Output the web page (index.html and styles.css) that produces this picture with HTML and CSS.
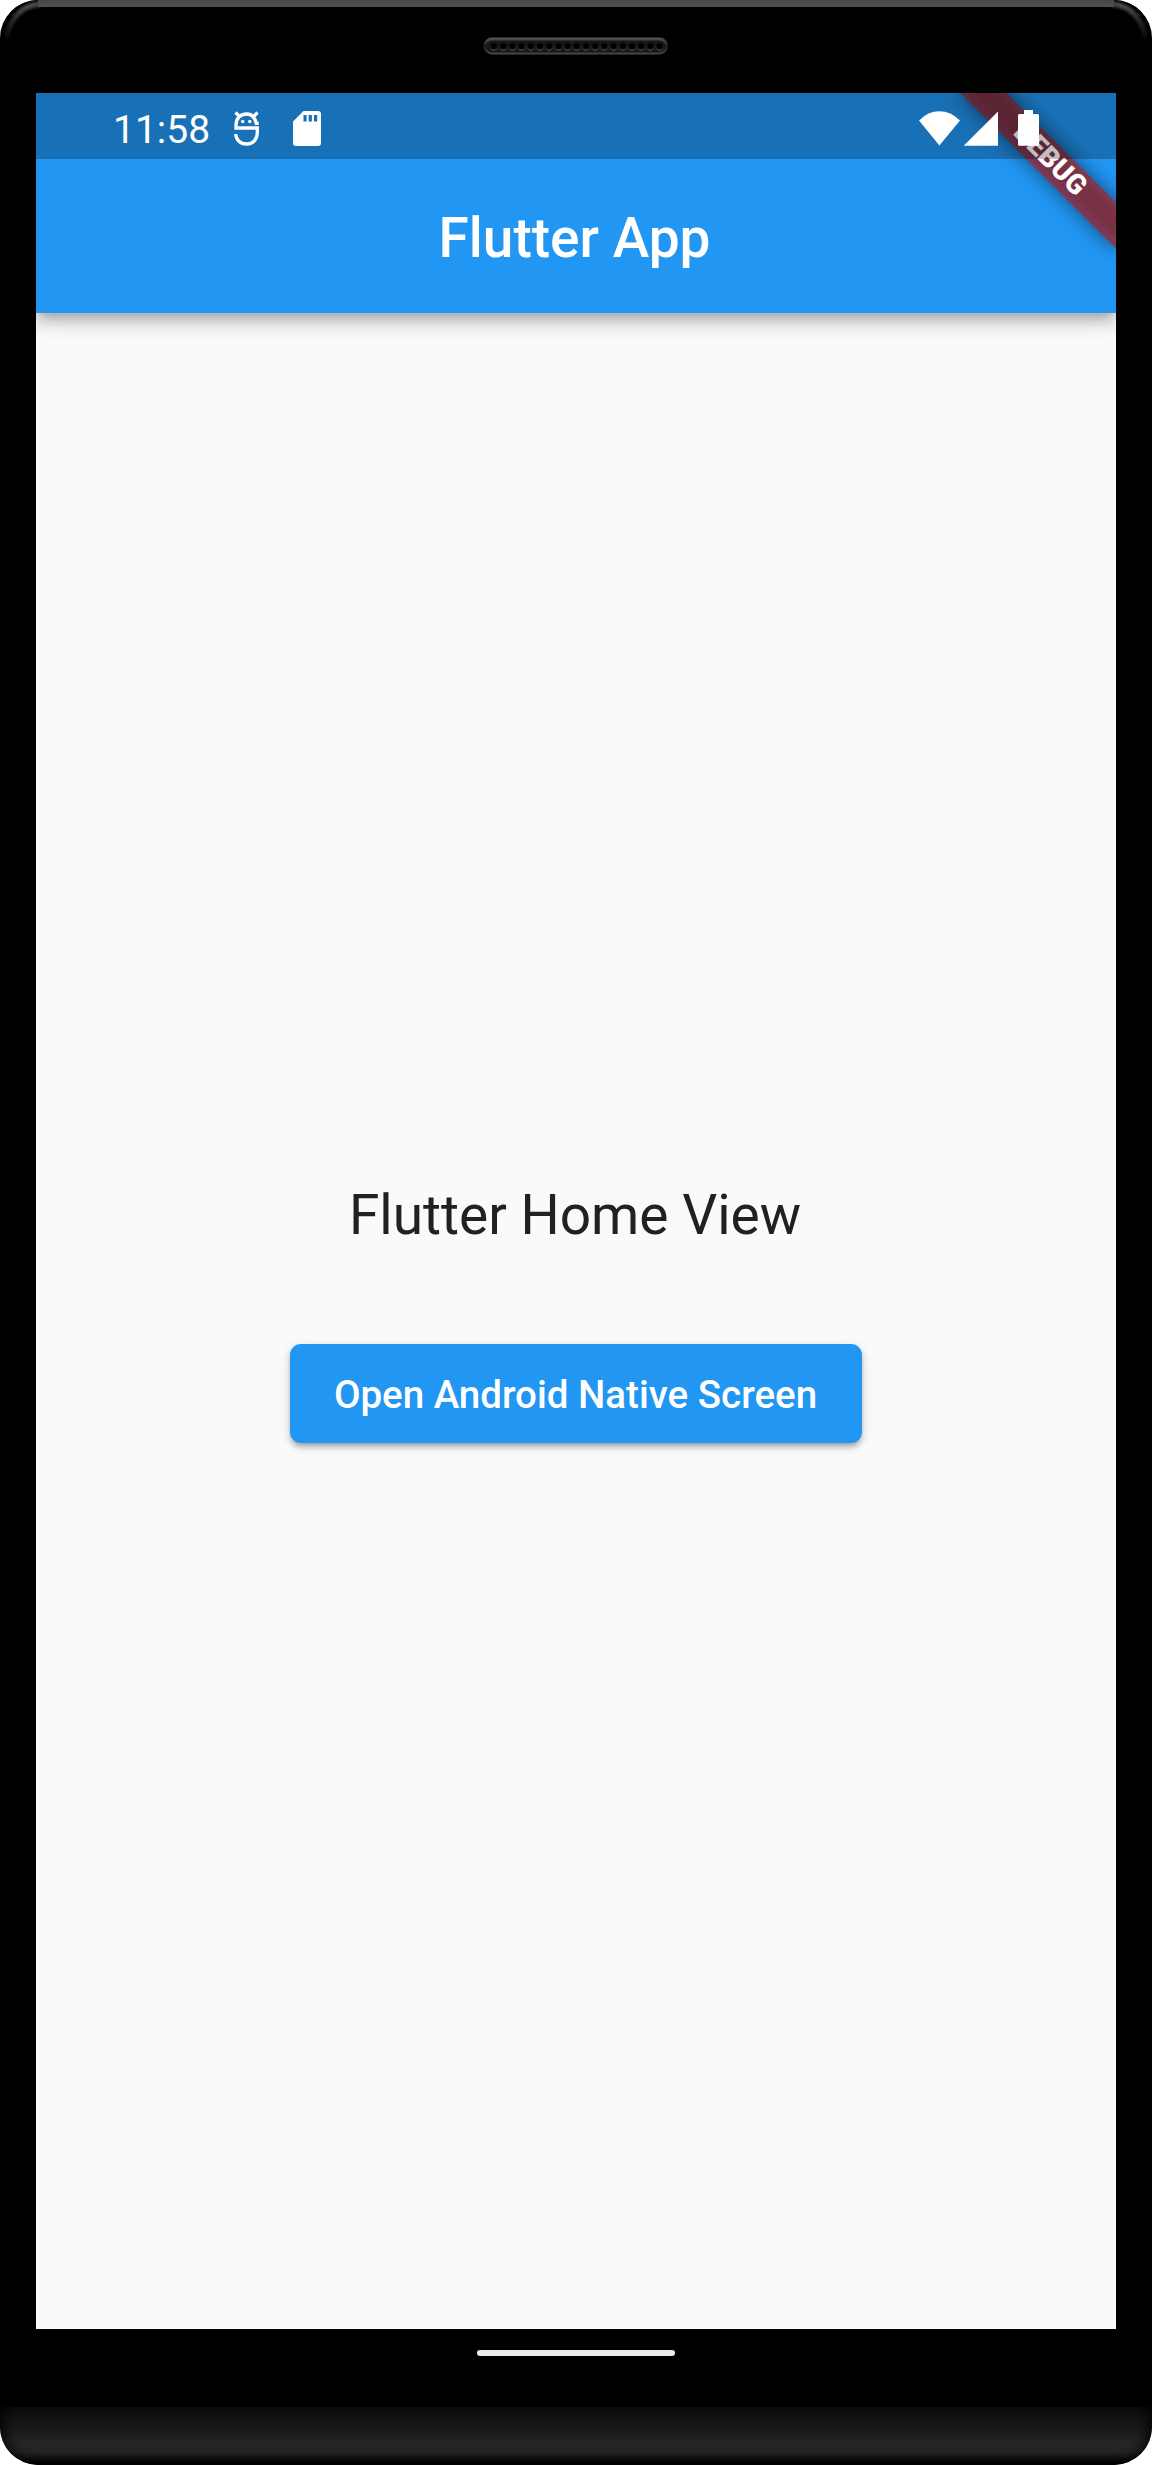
FILE: index.html
```html
<!DOCTYPE html>
<html lang="en">
<head>
<meta charset="utf-8">
<title>Flutter App</title>
<link rel="stylesheet" href="styles.css">
</head>
<body>
<div class="phone">
  <header class="bezel-top">
    <svg class="rim" width="1152" height="45" viewBox="0 0 1152 45">
      <defs>
        <linearGradient id="rimFade" x1="0" y1="0" x2="0" y2="45" gradientUnits="userSpaceOnUse">
          <stop offset="0" stop-color="#464646"/>
          <stop offset=".16" stop-color="#505050"/>
          <stop offset=".4" stop-color="#303030"/>
          <stop offset=".9" stop-color="#000"/>
        </linearGradient>
        <filter id="soft" x="-5%" y="-20%" width="110%" height="140%"><feGaussianBlur stdDeviation="1.5"/></filter>
      </defs>
      <path d="M38 0H1114V7H38Z" fill="url(#rimFade)"/>
      <path d="M4 45C5 20 18 4 38 3M1148 45C1147 20 1134 4 1114 3" fill="none" stroke="#000" stroke-width="8"/>
      <path d="M6 45C7 22 20 5 40 4M1146 45C1145 22 1132 5 1112 4" fill="none" stroke="url(#rimFade)" stroke-width="5" filter="url(#soft)"/>
      <path d="M40 0H1112V7H40Z" fill="url(#rimFade)"/>
    </svg>
    <svg class="speaker" width="186" height="18" viewBox="483 37.5 186 18">
      <defs>
        <linearGradient id="slot" x1="0" y1="0" x2="0" y2="1">
          <stop offset="0" stop-color="#585858"/>
          <stop offset=".5" stop-color="#1c1c1c"/>
          <stop offset="1" stop-color="#4a4a4a"/>
        </linearGradient>
        <linearGradient id="hole" x1="0" y1="0" x2="0" y2="1">
          <stop offset=".4" stop-color="#151515"/>
          <stop offset="1" stop-color="#6a6a6a"/>
        </linearGradient>
        <pattern id="holes" x="489.4" y="42" width="9.2" height="10" patternUnits="userSpaceOnUse">
          <circle cx="4.6" cy="5" r="4" fill="url(#hole)"/>
          <circle cx="4.6" cy="4.7" r="3.3" fill="#000"/>
        </pattern>
      </defs>
      <rect x="483.5" y="38" width="184.5" height="17" rx="8.5" fill="url(#slot)"/>
      <rect x="486" y="41" width="179.5" height="12" rx="6" fill="#181818"/>
      <rect x="489.4" y="42" width="174.8" height="10" fill="url(#holes)"/>
    </svg>
  </header>

  <main class="screen">
    <div class="app-bar">
      <div class="status-bar">
        <time class="clock">11:58</time>
        <svg class="icon-s" width="26" height="36" viewBox="0 0 26 36" fill="none" stroke="#fff">
          <path d="M24.700 12.400H22.300C21 6.500 17.500 3 12.500 3C6 3 2 7.500 2 14V17H23.300V21C23.300 28.500 19 33 12.500 33C6.300 33 2 29 1.700 23" stroke-width="3.300"/>
          <path d="M1.500 1.500L6 6M23.500 1.500L19 6" stroke-width="3.200"/>
          <circle cx="8.700" cy="10.500" r="1.700" fill="#fff" stroke="none"/>
          <circle cx="15.800" cy="10.500" r="1.700" fill="#fff" stroke="none"/>
        </svg>
        <svg class="icon-sd" width="28" height="35" viewBox="0 0 28 35">
          <path fill="#fff" fill-rule="evenodd" d="M10.500 0H25Q28 0 28 3V32Q28 35 25 35H3Q0 35 0 32V10.500ZM10.500 4V10.500H13.600V4ZM15.600 4V10.500H18.900V4ZM21 4V10.500H24.200V4Z"/>
        </svg>
        <svg class="icons-right" width="122" height="37" viewBox="918 108 122 37" fill="#fff">
          <path d="M919 119.500Q928 110.300 939.400 110.300T960 119.500L939.400 144.600Z"/>
          <path d="M963.700 144.800H998V110.600Z"/>
          <path d="M1024 109H1033V113H1037.500Q1039 113 1039 114.500V143.300Q1039 144.800 1037.500 144.800H1019.500Q1018 144.800 1018 143.300V114.500Q1018 113 1019.500 113H1024Z"/>
        </svg>
      </div>
      <h1 class="title">Flutter App</h1>
    </div>
    <div class="home">
      <p class="heading">Flutter Home View</p>
      <button class="open-button" type="button">Open Android Native Screen</button>
    </div>
    <div class="debug-banner"><span>DEBUG</span></div>
  </main>

  <div class="nav-area"><div class="home-indicator"></div></div>
  <footer class="chin"></footer>
</div>
</body>
</html>
```
FILE: styles.css
```css
* { box-sizing: border-box; }

body {
  margin: 0;
  background: #fff;
  font-family: Roboto, "Liberation Sans", sans-serif;
}

.phone {
  width: 1152px;
  height: 2465px;
  display: flex;
  flex-direction: column;
  background: #000;
  border-radius: 38px;
  overflow: hidden;
}

.bezel-top {
  height: 93px;
  display: flex;
  flex-direction: column;
  align-items: center;
}

.rim, .speaker { display: block; flex: none; }
.speaker { margin-top: -8px; margin-right: 1px; }

.screen {
  position: relative;
  height: 2236px;
  margin: 0 36px;
  display: flex;
  flex-direction: column;
  background: #fafafa;
  overflow: hidden;
}

.app-bar {
  height: 220px;
  flex: none;
  background: #2196f3;
  color: #fff;
  box-shadow: 0 5px 11px -3px rgba(0, 0, 0, .2), 0 11px 14px rgba(0, 0, 0, .14), 0 3px 27px rgba(0, 0, 0, .12);
}

.status-bar {
  position: relative;
  z-index: 2;
  height: 66px;
  padding: 0 76px 0 77px;
  display: flex;
  align-items: flex-start;
  background: rgba(0, 0, 0, .25);
}

.clock {
  width: 120.500px;
  padding-top: 14px;
  font-size: 39px;
  line-height: 46px;
  white-space: nowrap;
}

.icon-s { margin-top: 18px; }
.icon-sd { margin: 17.500px 0 0 33px; }
.icons-right { margin: 15.500px 0 0 auto; }

.title {
  height: 154px;
  margin: 0;
  padding-right: 3px;
  font-size: 55px;
  font-weight: 500;
  line-height: 158px;
  text-align: center;
}

.home {
  flex: 1;
  display: flex;
  flex-direction: column;
  align-items: center;
  padding-top: 870px;
}

.heading {
  margin: 0;
  padding-right: 2px;
  color: #212121;
  font-size: 55px;
  line-height: 64px;
  white-space: nowrap;
}

.open-button {
  width: 572px;
  height: 99px;
  margin-top: 97.300px;
  padding: 2px 1px 0 0;
  border: 0;
  border-radius: 11px;
  background: #2196f3;
  color: #fff;
  font: 500 38.500px/46px Roboto, sans-serif;
  white-space: nowrap;
  box-shadow: 0 5px 5px -3px rgba(0, 0, 0, .2), 0 4px 6px rgba(0, 0, 0, .17), 0 3px 12px rgba(0, 0, 0, .1);
}

/* Diagonal ribbon lies across the corner, below the status icons. */
.debug-banner {
  position: absolute;
  z-index: 1;
  top: 49.500px;
  left: 904px;
  width: 220px;
  height: 33px;
  transform: rotate(45deg);
}

.debug-banner::before,
.debug-banner::after {
  content: "";
  position: absolute;
  inset: 0;
}

.debug-banner::before {
  background: rgba(0, 0, 0, .5);
  filter: blur(10px);
}

.debug-banner::after { background: rgba(183, 28, 28, .627); }

.debug-banner span {
  position: relative;
  z-index: 1;
  display: block;
  color: #fff;
  font-size: 28px;
  font-weight: 900;
  line-height: 31px;
  text-align: center;
}

.nav-area {
  height: 78px;
  padding-top: 21px;
  display: flex;
  justify-content: center;
}

.home-indicator {
  width: 198px;
  height: 6px;
  border-radius: 3px;
  background: #ebebeb;
}

.chin {
  height: 58px;
  border-radius: 0 0 38px 38px;
  background: linear-gradient(#0c0c0c, #181818 35%, #262626 65%, #222 78%, #000 98%);
  box-shadow: inset 12px 0 14px -9px #000, inset -12px 0 14px -9px #000;
}
```
